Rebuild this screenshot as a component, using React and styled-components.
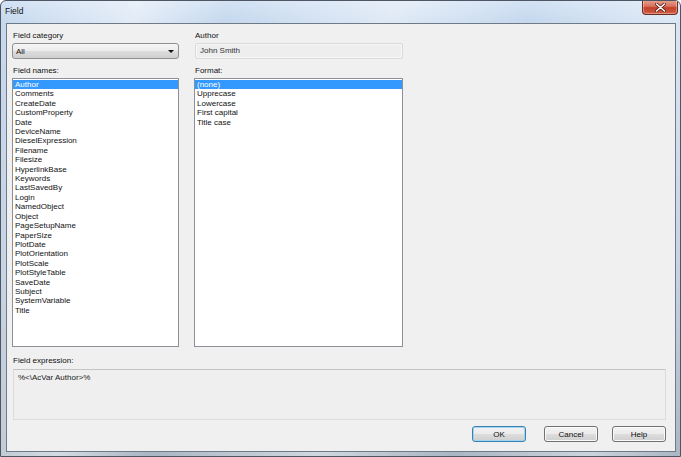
import React from "react";
import styled, { createGlobalStyle } from "styled-components";

const Global = createGlobalStyle`
  html, body {
    margin: 0;
    padding: 0;
    background: #ffffff;
  }
  * {
    box-sizing: border-box;
  }
`;

const Window = styled.div`
  width: 681px;
  height: 457px;
  display: flex;
  flex-direction: column;
  border: 1px solid #4f5663;
  border-radius: 6px 6px 0 0;
  background:
    linear-gradient(100deg, rgba(255,255,255,0) 0%, rgba(255,255,255,0.5) 18%, rgba(255,255,255,0) 30%, rgba(255,255,255,0.45) 52%, rgba(255,255,255,0) 70%, rgba(255,255,255,0.4) 88%, rgba(255,255,255,0) 100%),
    linear-gradient(180deg, #d3e2f4 0%, #c6d8ee 20px, #bccbdd 60%, #aab6c4 100%);
  font-family: "Liberation Sans", Arial, sans-serif;
  overflow: hidden;
`;

const TitleBar = styled.div`
  height: 22px;
  flex-shrink: 0;
  display: flex;
  justify-content: space-between;
  align-items: flex-start;
  padding-left: 4px;
`;

const TitleText = styled.div`
  font-size: 8.5px;
  line-height: 20px;
  color: #111;
`;

const CloseButton = styled.div`
  width: 36px;
  height: 15px;
  margin-right: 2px;
  margin-top: -1px;
  border: 1px solid #6b2a20;
  border-top: none;
  border-radius: 0 0 4px 4px;
  background: linear-gradient(180deg, #e8a493 0%, #d8705c 45%, #c2402a 55%, #cf5f45 100%);
  box-shadow: inset 0 0 0 1px rgba(255,255,255,0.35);
  display: flex;
  align-items: center;
  justify-content: center;
`;

const Frame = styled.div`
  flex: 1;
  display: flex;
  padding: 0 4px 4px 5px;
`;

const Client = styled.div`
  flex: 1;
  display: flex;
  flex-direction: column;
  background: #f0f0f0;
  border: 1px solid #6f7a88;
  padding: 5px 9px 0 5px;
  font-size: 8px;
  color: #111;
`;

const TopRow = styled.div`
  display: flex;
  gap: 15px;
`;

const Column = styled.div`
  width: ${(p) => p.$width}px;
  display: flex;
  flex-direction: column;
`;

const Label = styled.div`
  height: 14px;
  line-height: 14px;
  padding-left: 1px;
  margin-top: ${(p) => p.$top || 0}px;
  white-space: nowrap;
`;

const Dropdown = styled.div`
  height: 16px;
  border: 1px solid #8f8f8f;
  border-radius: 3px;
  background: linear-gradient(180deg, #f6f6f6 0%, #ebebeb 50%, #dddddd 51%, #cfcfcf 100%);
  display: flex;
  align-items: center;
  justify-content: space-between;
  padding: 0 4px 0 3px;
`;

const Arrow = styled.div`
  width: 0;
  height: 0;
  border-left: 3px solid transparent;
  border-right: 3px solid transparent;
  border-top: 3px solid #111;
`;

const ReadOnlyBox = styled.div`
  height: 16px;
  margin-left: 1px;
  border: 1px solid #dadada;
  border-radius: 2px;
  background: #eeeeee;
  box-shadow: inset 0 0 0 1px #f7f7f7;
  padding-left: 4px;
  line-height: 14px;
  color: #333;
`;

const ListBox = styled.div`
  height: 269px;
  border: 1px solid #8c9098;
  background: #ffffff;
  padding: 1px 0;
`;

const Item = styled.div`
  height: 9.42px;
  line-height: 9.42px;
  padding-left: 2px;
  white-space: nowrap;
  background: ${(p) => (p.$selected ? "#3399ff" : "transparent")};
  color: ${(p) => (p.$selected ? "#ffffff" : "#111")};
`;

const ExpressionBox = styled.div`
  height: 51px;
  margin: 1px 0 0 1px;
  border: 1px solid #dcdcdc;
  border-top-color: #c4c4c4;
  background: #efefef;
  padding: 3px 4px;
  line-height: 10px;
  color: #222;
`;

const ButtonRow = styled.div`
  display: flex;
  justify-content: flex-end;
  gap: 14px;
  margin-top: 6px;
`;

const Button = styled.div`
  width: 54px;
  height: 16px;
  margin-right: ${(p) => (p.$default ? 4 : 0)}px;
  border: 1px solid ${(p) => (p.$default ? "#3c7fb1" : "#707070")};
  border-radius: 3px;
  background: linear-gradient(180deg, #f2f2f2 0%, #ebebeb 50%, #dddddd 51%, #cfcfcf 100%);
  box-shadow: ${(p) => (p.$default ? "inset 0 0 0 1px #9fd4f2" : "inset 0 0 0 1px #fbfbfb")};
  display: flex;
  align-items: center;
  justify-content: center;
  color: #111;
`;

const fieldNames = [
  "Author",
  "Comments",
  "CreateDate",
  "CustomProperty",
  "Date",
  "DeviceName",
  "DieselExpression",
  "Filename",
  "Filesize",
  "HyperlinkBase",
  "Keywords",
  "LastSavedBy",
  "Login",
  "NamedObject",
  "Object",
  "PageSetupName",
  "PaperSize",
  "PlotDate",
  "PlotOrientation",
  "PlotScale",
  "PlotStyleTable",
  "SaveDate",
  "Subject",
  "SystemVariable",
  "Title",
];

const formats = ["(none)", "Upprecase", "Lowercase", "First capital", "Title case"];

const App = () => {
  return (
    <>
      <Global />
      <Window>
        <TitleBar>
          <TitleText>Field</TitleText>
          <CloseButton>
            <svg width="11" height="9" viewBox="0 0 11 9">
              <path
                d="M1.5 1 L9.5 8 M9.5 1 L1.5 8"
                stroke="#5a1c12"
                strokeWidth="3"
                strokeLinecap="round"
              />
              <path
                d="M1.5 1 L9.5 8 M9.5 1 L1.5 8"
                stroke="#ffffff"
                strokeWidth="1.6"
                strokeLinecap="round"
              />
            </svg>
          </CloseButton>
        </TitleBar>
        <Frame>
          <Client>
            <TopRow>
              <Column $width={167}>
                <Label>Field category</Label>
                <Dropdown>
                  <span>All</span>
                  <Arrow />
                </Dropdown>
                <Label $top={5}>Field names:</Label>
                <ListBox>
                  {fieldNames.map((name, i) => (
                    <Item key={name} $selected={i === 0}>
                      {name}
                    </Item>
                  ))}
                </ListBox>
              </Column>
              <Column $width={209}>
                <Label>Author</Label>
                <ReadOnlyBox>John Smith</ReadOnlyBox>
                <Label $top={5}>Format:</Label>
                <ListBox>
                  {formats.map((f, i) => (
                    <Item key={f} $selected={i === 0}>
                      {f}
                    </Item>
                  ))}
                </ListBox>
              </Column>
            </TopRow>
            <Label $top={7}>Field expression:</Label>
            <ExpressionBox>%&lt;\AcVar Author&gt;%</ExpressionBox>
            <ButtonRow>
              <Button $default>OK</Button>
              <Button>Cancel</Button>
              <Button>Help</Button>
            </ButtonRow>
          </Client>
        </Frame>
      </Window>
    </>
  );
};

export default App;
